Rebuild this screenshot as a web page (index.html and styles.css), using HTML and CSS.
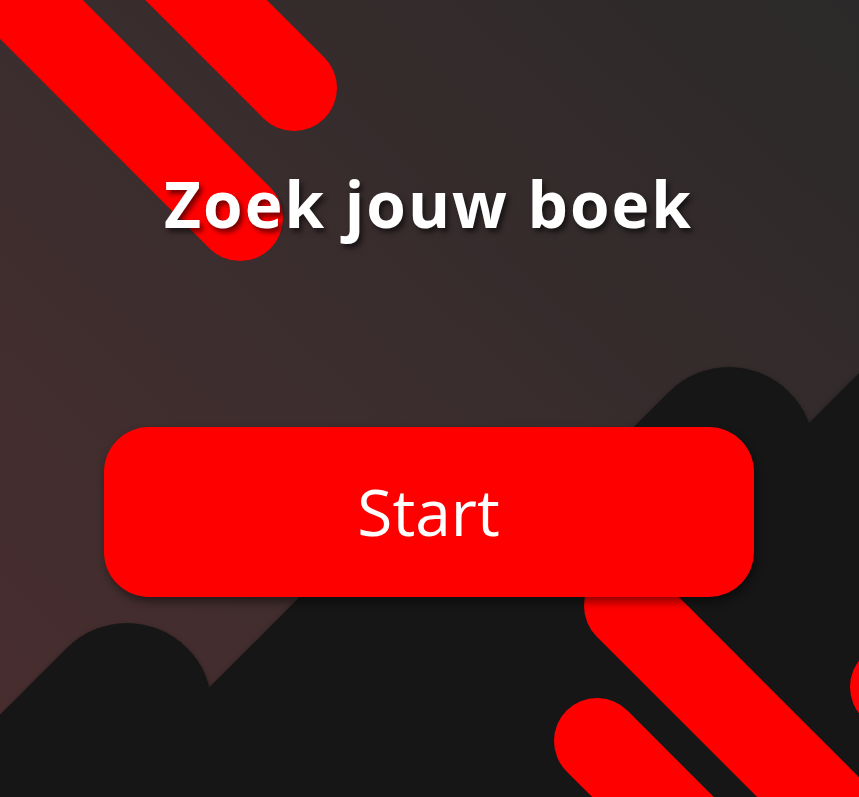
FILE: index.html
```html
<!DOCTYPE html>
<html lang="nl">
<head>
<meta charset="utf-8">
<title>Zoek jouw boek</title>
<link rel="stylesheet" href="styles.css">
</head>
<body>
<main class="screen">
  <svg class="backdrop" viewBox="0 0 859 797" width="859" height="797" aria-hidden="true">
    <defs>
      <filter id="soft" x="-20%" y="-20%" width="140%" height="140%">
        <feDropShadow dx="0" dy="2" stdDeviation="3" flood-color="#000" flood-opacity="0.35"/>
      </filter>
    </defs>
    <g class="dark" filter="url(#soft)">
      <line x1="127" y1="708" x2="-400" y2="1235"/>
      <line x1="480" y1="537" x2="-100" y2="1117"/>
      <line x1="729" y1="452" x2="100" y2="1081"/>
      <polygon points="859,373 859,797 435,797"/>
    </g>
    <g class="red">
      <line x1="240" y1="218" x2="-100" y2="-122"/>
      <line x1="294" y1="88" x2="100" y2="-106"/>
      <line x1="627" y1="606" x2="900" y2="879"/>
      <line x1="597" y1="741" x2="800" y2="944"/>
      <line x1="893" y1="687" x2="1100" y2="894"/>
    </g>
  </svg>
  <div class="content">
    <h1 class="title">Zoek jouw boek</h1>
    <button class="start" type="button">Start</button>
  </div>
</main>
</body>
</html>
```

FILE: styles.css
```css
html, body {
  margin: 0;
  padding: 0;
  background: #171717;
}

.screen {
  display: grid;
  width: 859px;
  height: 797px;
  overflow: hidden;
  background: linear-gradient(to top right, #4a2d2f 0%, #3c2d2e 45%, #2b2929 100%);
}

.backdrop,
.content {
  grid-area: 1 / 1;
}

.backdrop {
  display: block;
}

.dark line {
  stroke: #171717;
  stroke-width: 170;
  stroke-linecap: round;
}

.dark polygon {
  fill: #171717;
}

.red line {
  stroke: #ff0000;
  stroke-width: 86;
  stroke-linecap: round;
}

.content {
  display: flex;
  flex-direction: column;
  align-items: center;
  padding-top: 172px;
  padding-right: 2px;
}

.title {
  margin: 0;
  font-family: "Open Sans", "DejaVu Sans", sans-serif;
  font-weight: 700;
  font-size: 64px;
  line-height: 1;
  letter-spacing: 2px;
  color: #ffffff;
  text-shadow: 3px 4px 5px rgba(0, 0, 0, 0.55);
}

.start {
  margin-top: 191px;
  width: 650px;
  height: 170px;
  border: none;
  border-radius: 45px;
  background: #ff0000;
  color: #ffffff;
  font-family: "Open Sans", "DejaVu Sans", sans-serif;
  font-weight: 400;
  font-size: 64px;
  line-height: 1;
  box-shadow: 2px 5px 10px rgba(0, 0, 0, 0.45);
  cursor: pointer;
}
```
